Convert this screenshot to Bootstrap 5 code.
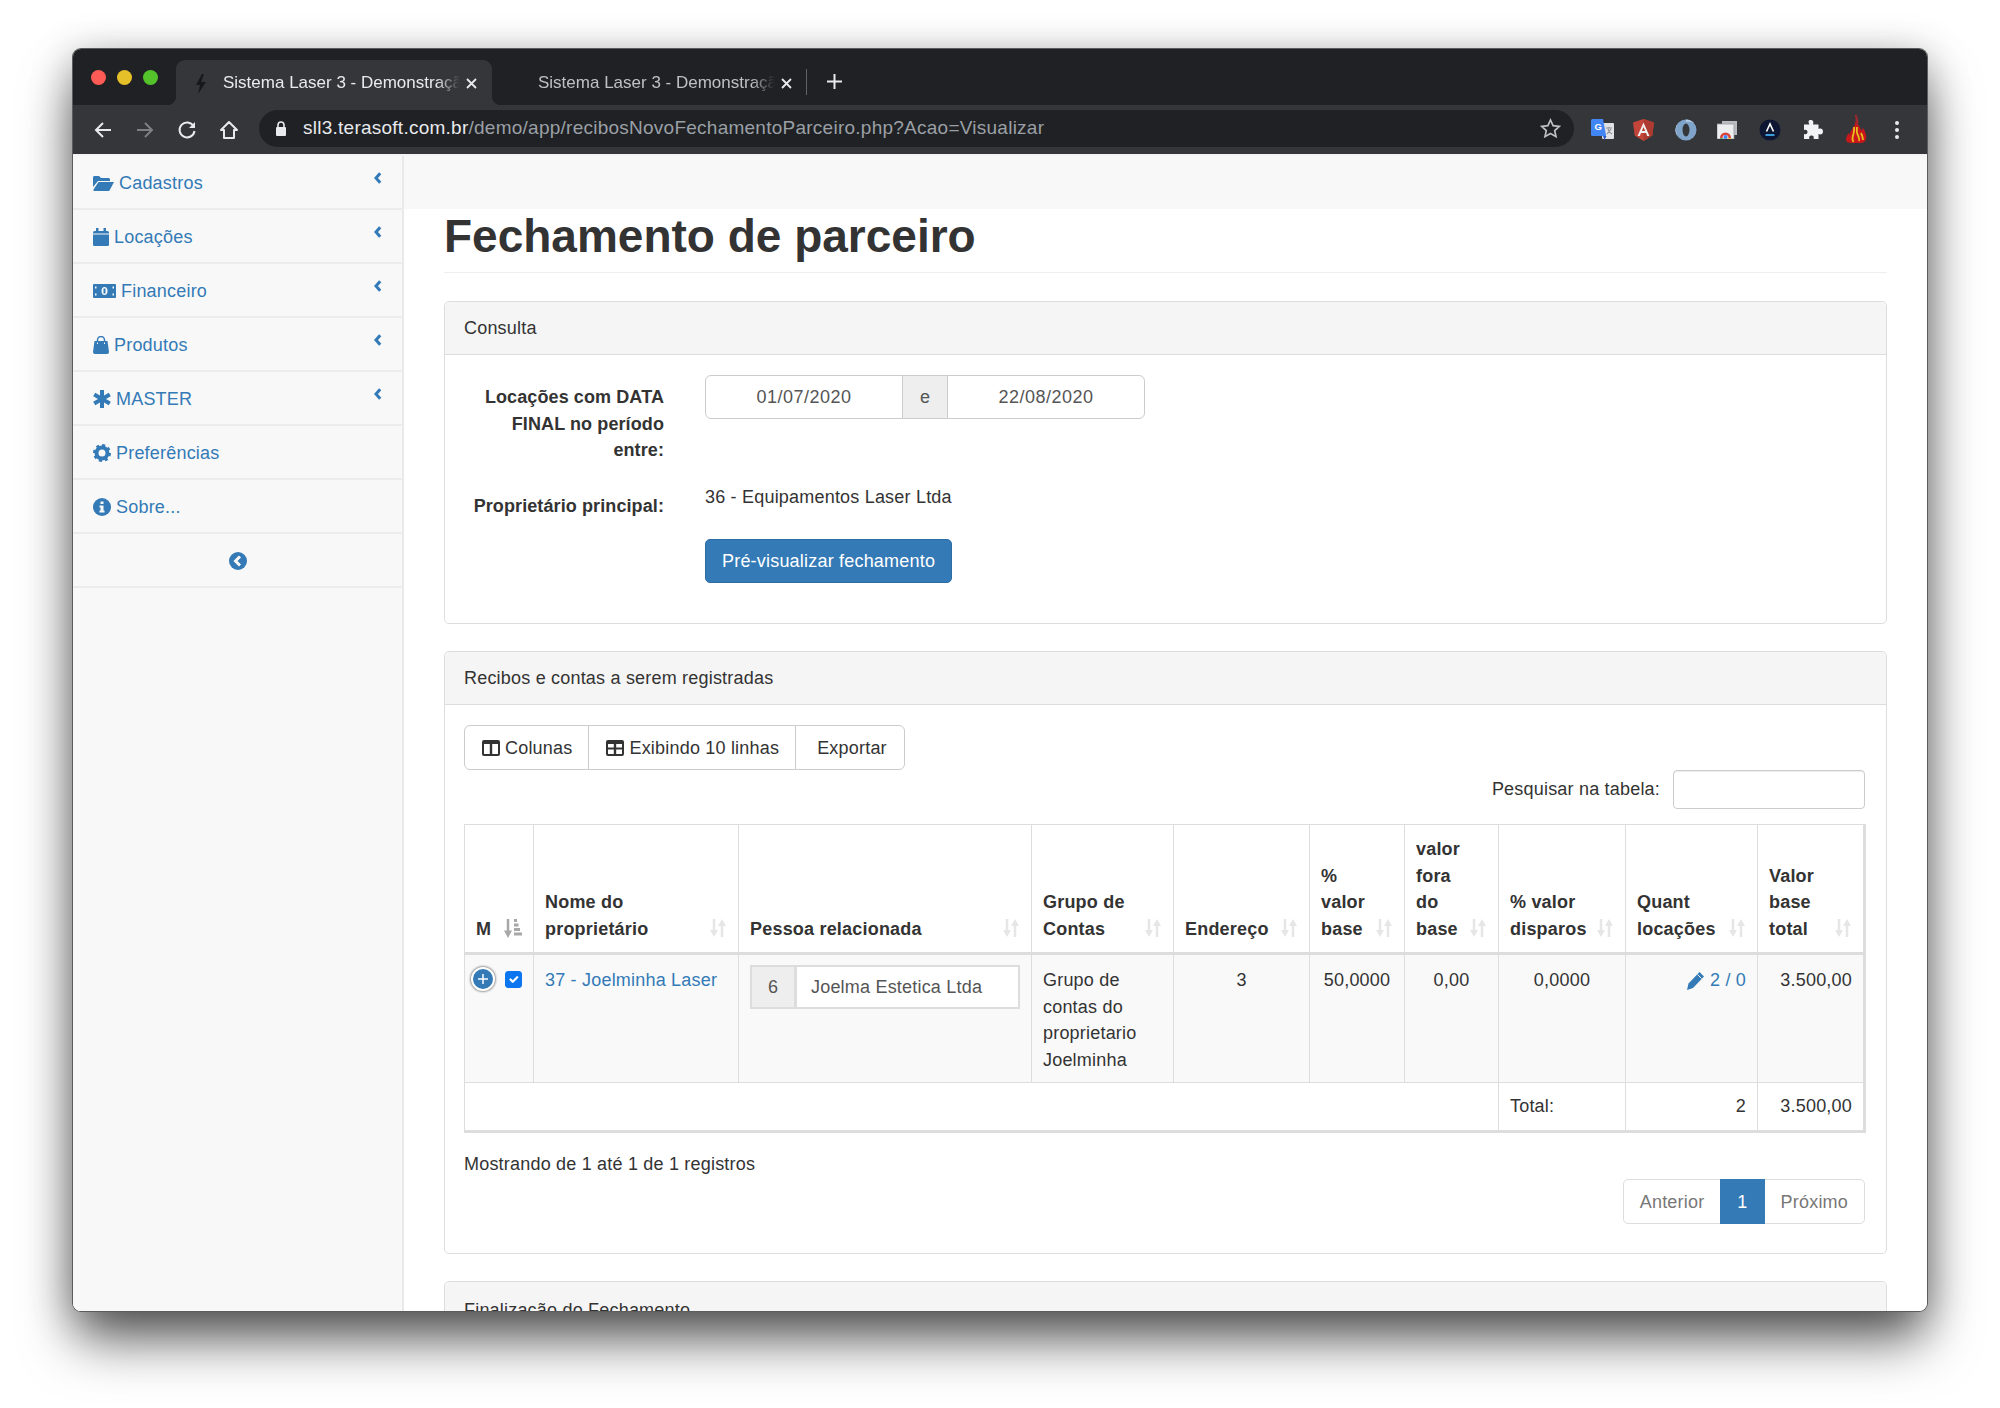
<!doctype html>
<html lang="pt-BR">
<head>
  <meta charset="utf-8">
  <title>Fechamento de parceiro</title>
  <link href="https://cdn.jsdelivr.net/npm/bootstrap@5.3.0/dist/css/bootstrap.min.css" rel="stylesheet">
  <style>
    html, body { height: 100%; }
    body {
      background: #fff;
      color: #333;
      font-family: "Liberation Sans", Arial, sans-serif;
      font-size: 18px;
      line-height: 26.5px;
      letter-spacing: .2px;
      padding: 49px 73px 0;
      overflow: hidden;
    }
    a { color: #337ab7; text-decoration: none; }

    /* janela do navegador */
    .browser-win {
      height: 1262px;
      border-radius: 8px;
      overflow: hidden;
      display: flex;
      flex-direction: column;
      box-shadow: 0 0 0 1px #5c5c5c, 0 32px 54px -4px rgba(0,0,0,.62), 0 6px 40px rgba(0,0,0,.28);
    }
    .tabstrip { height: 56px; background: #202124; flex: none; padding-top: 11px; }
    .traffic { width: 103px; padding-left: 18px; gap: 11px; padding-top: 10px; }
    .traffic i { width: 15px; height: 15px; border-radius: 50%; display: block; }
    .tl-red { background: #fd5b55; }
    .tl-yellow { background: #e6c029; }
    .tl-green { background: #54c22b; }
    .chrome-tab {
      width: 316px;
      height: 45px;
      border-radius: 9px 9px 0 0;
      font-size: 17px;
      letter-spacing: 0;
      padding-left: 19px;
      padding-top: 2px;
      color: #bdc1c6;
      position: relative;
    }
    .chrome-tab.is-active { background: #35363a; color: #e8eaed; }
    .chrome-tab.is-active::before, .chrome-tab.is-active::after {
      content: "";
      position: absolute;
      bottom: 0;
      width: 9px;
      height: 9px;
    }
    .chrome-tab.is-active::before { left: -9px; background: radial-gradient(circle at 0 0, transparent 9px, #35363a 9.5px); }
    .chrome-tab.is-active::after { right: -9px; background: radial-gradient(circle at 100% 0, transparent 9px, #35363a 9.5px); }
    .tab-title {
      width: 237px;
      margin-left: 16px;
      margin-right: 5px;
      white-space: nowrap;
      overflow: hidden;
      -webkit-mask-image: linear-gradient(to right, #000 90%, transparent 100%);
      mask-image: linear-gradient(to right, #000 90%, transparent 100%);
    }
    .tab-inactive { margin-left: 14px; padding-left: 32px; width: 300px; }
    .tab-inactive .tab-title { margin-left: 0; }
    .tab-sep { width: 1px; height: 26px; background: #5f6368; margin: 9px 0 0 0; }
    .tab-plus { margin: 12px 0 0 18px; }

    .toolbar { height: 51px; background: #35363a; flex: none; padding: 0 0 2px 20px; border-bottom: 2px solid #f4f4f4; }
    .nav-ico { width: 42px; flex: none; }
    .omnibox {
      width: 1315px;
      height: 37px;
      margin: 0 13px 0 -2px;
      background: #202124;
      border-radius: 19px;
      padding: 0 13px 0 16px;
      font-size: 19px;
      color: #9aa0a6;
      white-space: nowrap;
      letter-spacing: .25px;
    }
    .omnibox b { font-weight: 400; color: #e8eaed; }
    .ext-ico { width: 42px; flex: none; }
    .ext-nudge { padding-left: 2px; }
    .ext-dots { width: 33px; margin-left: 9px; flex: none; }

    .win-body { flex: 1; min-height: 0; background: #fff; }
    .side-menu { width: 331px; flex: none; background: #f8f8f8; border-right: 2px solid #e9e9e9; }
    .side-item {
      height: 54px;
      border-bottom: 2px solid #ececec;
      padding: 2px 20px 0 20px;
      color: #337ab7;
      gap: 5px;
    }
    .side-item:first-child { margin-right: -2px; padding-right: 22px; border-bottom-color: #ececec; }
    .side-item .side-chev { margin-left: auto; margin-top: -10px; }
    .side-ico { flex: none; }

    .main-area { flex: 1; min-width: 0; }
    .top-bar { height: 53px; background: #f8f8f8; flex: none; margin-left: -1px; }
    .page-area { padding: 0 40px; }
    .page-title {
      font-size: 46px;
      font-weight: 700;
      line-height: 51px;
      letter-spacing: 0;
      margin: 2px 0 0;
      padding-bottom: 10px;
      border-bottom: 1px solid #eee;
    }

    .panel-box { border: 1px solid #ddd; border-radius: 5px; margin-top: 27px; --bs-card-bg: #fff; }
    .page-title + .panel-box { margin-top: 28px; }
    .panel-box > .card-header { background: #f5f5f5; border-bottom: 1px solid #ddd; height: 53px; padding: 13px 19px; font-size: 18px; }
    .panel-box > .card-body { padding: 20px 21px 20px 19px; }
    .panel-box > .head-cut { padding-top: 15px; }

    .form-gap { gap: 41px; }
    .form-lbl { width: 200px; flex: none; text-align: right; font-weight: 700; padding-top: 9px; letter-spacing: .1px; }
    .date-group { width: 440px; }
    .date-group .form-control, .date-group .input-group-text, .rel-group .form-control, .rel-group .input-group-text {
      font-size: 18px;
      color: #555;
      line-height: 26px;
      letter-spacing: .2px;
    }
    .date-group .form-control { text-align: center; height: 44px; border-color: #ccc; padding: 8px; letter-spacing: .5px; }
    .date-group .input-group-text { height: 44px; width: 46px; justify-content: center; background: #eee; border-color: #ccc; padding: 0; }
    .btn-main { background: #337ab7; border: 1px solid #2e6da4; color: #fff; font-size: 18px; line-height: 26px; padding: 8px 16px; border-radius: 5px; height: 44px; letter-spacing: .2px; }

    .tool-btn { background: #fff; border: 1px solid #ccc; color: #333; font-size: 18px; line-height: 26px; padding: 8px 16px 8px 17px; height: 45px; display: flex; align-items: center; gap: 5px; letter-spacing: .2px; }
    .tool-exp { padding: 8px 17px 8px 21px; }

    .search-lbl { margin-right: 13px; }
    .search-box { width: 192px; height: 39px; border: 1px solid #ccc; border-radius: 4px; box-shadow: inset 0 1px 1px rgba(0,0,0,.075); }

    .data-table { table-layout: fixed; width: 1400px; margin: 15px 0 0; border-collapse: collapse; border: 1px solid #ddd; border-right-width: 3px; border-bottom-width: 3px; color: #333; --bs-table-bg: transparent; }
    .data-table th, .data-table td { border: 1px solid #ddd; padding: 11px; font-size: 18px; line-height: 26.5px; }
    .data-table thead th { vertical-align: bottom; border-bottom: 3px solid #ddd; font-weight: 700; padding-bottom: 10px; }
    .data-table tbody td { background: #f9f9f9; vertical-align: top; padding-top: 12px; padding-bottom: 9px; }
    .data-table tfoot td { height: 47px; padding-top: 10px; padding-bottom: 10px; }
    .w-m { width: 69px; } .w-nome { width: 205px; } .w-pessoa { width: 293px; } .w-grupo { width: 142px; }
    .w-end { width: 136px; } .w-pct { width: 95px; } .w-fora { width: 94px; } .w-disp { width: 127px; }
    .w-quant { width: 132px; } .w-total { width: 107px; }
    .th-flex { display: flex; justify-content: space-between; align-items: flex-end; }
    .sort-ico { flex: none; margin-bottom: 4px; }
    .data-table td.cell-m { padding: 11px 5px 9px; }
    .plus-ring { width: 24px; height: 24px; border-radius: 50%; background: #337ab7; border: 2px solid #fff; box-shadow: 0 0 2px 1px #999; flex: none; margin-left: 1px; margin-top: 1px; }
    .check-m.form-check-input { width: 17px; height: 17px; margin: 5px 0 0 2px; border-radius: 3px; float: none; flex: none; }
    .check-m.form-check-input:checked { background-color: #0b76ef; border-color: #0b76ef; }
    .rel-group { width: 270px; }
    .rel-group .input-group-text, .rel-group .form-control { height: 44px; border-radius: 0; border: 2px solid #ddd; }
    .rel-group .input-group-text { width: 46px; background: #eee; justify-content: center; padding: 0; }
    .rel-group .form-control { padding: 0 14px; background: #fff; margin-left: -2px; }
    .data-table td.cell-rel { padding-top: 10px; padding-bottom: 0; }

    .info-line { margin-top: 18px; }
    .pager-row { margin-top: 2px; }
    .pager-row .pagination { margin: 0 0 9px; --bs-pagination-font-size: 18px; --bs-pagination-padding-x: 16px; --bs-pagination-padding-y: 9px; --bs-pagination-color: #777; --bs-pagination-border-color: #ddd; --bs-pagination-active-bg: #337ab7; --bs-pagination-active-border-color: #337ab7; --bs-pagination-border-radius: 5px; }
    .pager-row .page-link { line-height: 26px; height: 45px; }
  </style>
</head>
<body>
  <svg width="0" height="0" class="position-absolute">
    <symbol id="sort-both" viewBox="0 0 18 20"><path d="M5 1v12M13 19V7" stroke="#e6e6e6" stroke-width="2.5"/><path d="M1 12h8l-4 7zM9 8h8l-4-7z" fill="#e6e6e6"/></symbol>
    <symbol id="chev-left" viewBox="0 0 8 12"><path d="M6.200 1.200 2 6l4.200 4.800" fill="none" stroke="#337ab7" stroke-width="3"/></symbol>
    <symbol id="tab-x" viewBox="0 0 13 13"><path d="m2 2 9 9M11 2l-9 9" stroke="#e8eaed" stroke-width="1.800"/></symbol>
  </svg>

  <div class="browser-win">
    <div class="tabstrip d-flex">
      <div class="traffic d-flex">
        <i class="tl-red"></i><i class="tl-yellow"></i><i class="tl-green"></i>
      </div>
      <div class="chrome-tab is-active d-flex align-items-center">
        <svg width="12" height="20" viewBox="0 0 12 20"><path d="M7 0 1 11h4l-2 9 8-12H6l3-8z" fill="#17181a"/></svg>
        <span class="tab-title">Sistema Laser 3 - Demonstração</span>
        <svg width="13" height="13"><use href="#tab-x"/></svg>
      </div>
      <div class="chrome-tab tab-inactive d-flex align-items-center">
        <span class="tab-title">Sistema Laser 3 - Demonstração</span>
        <svg width="13" height="13"><use href="#tab-x"/></svg>
      </div>
      <div class="tab-sep"></div>
      <svg class="tab-plus" width="19" height="19" viewBox="0 0 19 19"><path d="M9.500 2v15M2 9.500h15" stroke="#e8eaed" stroke-width="2"/></svg>
    </div>

    <div class="toolbar d-flex align-items-center">
      <div class="nav-ico"><svg width="20" height="20" viewBox="0 0 20 20"><path d="M18 10H3M10 3l-7 7 7 7" fill="none" stroke="#e8eaed" stroke-width="2"/></svg></div>
      <div class="nav-ico"><svg width="20" height="20" viewBox="0 0 20 20"><path d="M2 10h15M10 3l7 7-7 7" fill="none" stroke="#7c7f84" stroke-width="2"/></svg></div>
      <div class="nav-ico"><svg width="20" height="20" viewBox="0 0 20 20"><path d="M16.500 6A7.500 7.500 0 1 0 17.500 11" fill="none" stroke="#e8eaed" stroke-width="2"/><path d="M18 2v6h-6z" fill="#e8eaed"/></svg></div>
      <div class="nav-ico"><svg width="20" height="20" viewBox="0 0 20 20"><path d="M10 2 2 10h3v8h10v-8h3z" fill="none" stroke="#e8eaed" stroke-width="2" stroke-linejoin="round"/></svg></div>
      <div class="omnibox d-flex align-items-center flex-fill">
        <svg width="12" height="15" viewBox="0 0 12 15" class="me-3 flex-none"><path d="M3 6V4a3 3 0 0 1 6 0v2" fill="none" stroke="#e8eaed" stroke-width="1.600"/><rect x="1" y="6" width="10" height="9" rx="1" fill="#e8eaed"/></svg>
        <span><b>sll3.terasoft.com.br</b>/demo/app/recibosNovoFechamentoParceiro.php?Acao=Visualizar</span>
        <svg class="ms-auto" width="21" height="21" viewBox="0 0 21 21"><path d="m10.500 2 2.600 5.700 6.200.7-4.600 4.200 1.300 6.100-5.500-3.100L5 18.700l1.300-6.100L1.700 8.400l6.200-.7z" fill="none" stroke="#bdc1c6" stroke-width="1.700"/></svg>
      </div>
      <div class="ext-ico ms-1"><svg width="23" height="21" viewBox="0 0 23 21"><rect x="11" y="4" width="12" height="16" rx="1" fill="#dfe1e4"/><path d="M1.500 0H12l3 16v1H1.500A1.500 1.500 0 0 1 0 15.500v-14A1.500 1.500 0 0 1 1.500 0z" fill="#4285f4"/><path d="m12 17 1.500 4 2-4z" fill="#2a56c6"/><text x="3.500" y="11" font-size="9.500" font-weight="700" fill="#fff" font-family="Liberation Sans">G</text><path d="M15 9h6M18 8v1M16 15l4-5M17 10c.5 2 2 4 4 5" fill="none" stroke="#8a8d91" stroke-width="1.100"/></svg></div>
      <div class="ext-ico"><svg width="21" height="22" viewBox="0 0 21 22"><path d="M10.500 0 21 3.500 19.300 16.500 10.500 22 1.700 16.500 0 3.500z" fill="#c3453a"/><path d="M10.500 0 21 3.500 19.300 16.500 10.500 22z" fill="#ae3b31"/><path d="M10.500 3.500 4.500 17h2.300l1.200-3h5l1.200 3h2.300zM8.900 12l1.600-4 1.600 4z" fill="#f1eeee"/></svg></div>
      <div class="ext-ico"><svg width="22" height="22" viewBox="0 0 22 22"><circle cx="11" cy="11" r="10.500" fill="#7fa3c9"/><path d="M3 4a10.500 10.500 0 0 0 0 14A14 14 0 0 1 3 4z" fill="#c6d8ea"/><path d="M11 .5a10.500 10.500 0 0 1 8 3.500c-2-1-4-1.500-8-1z" fill="#b5cce2"/><ellipse cx="11" cy="11" rx="3.500" ry="6.500" fill="#35363a"/></svg></div>
      <div class="ext-ico"><svg width="20" height="18" viewBox="0 0 20 18"><rect x="5" y="0" width="15" height="14" fill="#b9bcc0"/><rect x="0" y="3" width="17" height="15" fill="#eceef0" stroke="#9a9da1" stroke-width=".8"/><path d="M3 17a5.500 5.500 0 0 1 11 0h-2.500a3 3 0 0 0-6 0z" fill="#d9433a"/><path d="M3 17h2.500l1 .8H3z" fill="#3aa757"/><path d="M11.500 17H14v.8h-3.500z" fill="#f4c20d"/><circle cx="8.500" cy="16" r="2" fill="#4285f4"/></svg></div>
      <div class="ext-ico"><svg width="22" height="22" viewBox="0 0 22 22"><circle cx="11" cy="11" r="10.500" fill="#0d1733"/><path d="m7.500 12.500 3.500-7.500 3.500 7.500" fill="none" stroke="#fff" stroke-width="1.600"/><rect x="6.500" y="15" width="9" height="2" fill="#3c9bd8"/></svg></div>
      <div class="ext-ico ext-nudge"><svg width="20" height="19" viewBox="0 0 20 19"><path d="M7.500 0c2.500 0 3.500 2 2.500 4.500h5.500v4.500c2.500-1 4.500 0 4.500 2.500S18 15 15.500 14v5h-5c1-2.500-.5-3.500-2-3.500s-3 1-2 3.500H1v-5c2.500 1 3.500-.5 3.500-2S3.500 9 1 10V4.500h5.500C5 2 5.500 0 7.500 0z" fill="#f1f3f4"/></svg></div>
      <div class="ext-ico ext-nudge"><svg width="22" height="30" viewBox="0 0 22 30"><path d="M2 28c-2-3 0-7 2-9l1 2c0-5 4-7 5-11 1-3 1-7 0-10 2 3 3 7 3 10 1 3 3 4 3 7l2-3c2 3 4 8 3 11-1 3-3 4-5 4H6c-2 0-3-1-4-1z" fill="#c9161b"/><path d="M8.500 28c-2-3-1-5 0-8 .5-2 1-4 .5-7M14 27c1-3-1-5-2-8-.5-2 0-4 0-6M18 26c0-3-1-5-2-7" fill="none" stroke="#e9bf1c" stroke-width="1.800"/><path d="M10.500 1c1.500 3 2.500 6 1.500 10" fill="none" stroke="#9a2a30" stroke-width="2"/></svg></div>
      <div class="ext-dots"><svg width="6" height="20" viewBox="0 0 6 20"><circle cx="3" cy="3" r="2" fill="#e8eaed"/><circle cx="3" cy="10" r="2" fill="#e8eaed"/><circle cx="3" cy="17" r="2" fill="#e8eaed"/></svg></div>
    </div>

    <div class="win-body d-flex">
      <nav class="side-menu d-flex flex-column">
        <a href="#" class="side-item d-flex align-items-center">
          <svg class="side-ico" width="21" height="15" viewBox="0 0 21 15"><path d="M0 1.500C0 .7.600 0 1.500 0h4.500l2 2h7.500c.8 0 1.500.6 1.500 1.500V5H5L0 11z" fill="#337ab7"/><path d="M5.500 6H21l-4.500 8.500a1 1 0 0 1-1 .5H1.500a1 1 0 0 1-1-1.500z" fill="#337ab7"/></svg>
          <span>Cadastros</span>
          <svg class="side-chev" width="8" height="12"><use href="#chev-left"/></svg>
        </a>
        <a href="#" class="side-item d-flex align-items-center">
          <svg class="side-ico" width="16" height="18" viewBox="0 0 16 18"><rect x="0" y="3" width="16" height="15" rx="1.500" fill="#337ab7"/><rect x="3" y="0" width="2.500" height="4" fill="#337ab7"/><rect x="10.500" y="0" width="2.500" height="4" fill="#337ab7"/><rect y="5.500" width="16" height="1" fill="#f8f8f8"/></svg>
          <span>Locações</span>
          <svg class="side-chev" width="8" height="12"><use href="#chev-left"/></svg>
        </a>
        <a href="#" class="side-item d-flex align-items-center">
          <svg class="side-ico" width="23" height="14" viewBox="0 0 23 14"><rect width="23" height="14" rx="1" fill="#337ab7"/><ellipse cx="11.500" cy="7" rx="3" ry="4" fill="#f8f8f8"/><rect x="10.500" y="4.500" width="2" height="5" fill="#337ab7"/><rect x="2" y="2.500" width="1.500" height="2" fill="#f8f8f8"/><rect x="19.500" y="2.500" width="1.500" height="2" fill="#f8f8f8"/><rect x="2" y="9.500" width="1.500" height="2" fill="#f8f8f8"/><rect x="19.500" y="9.500" width="1.500" height="2" fill="#f8f8f8"/></svg>
          <span>Financeiro</span>
          <svg class="side-chev" width="8" height="12"><use href="#chev-left"/></svg>
        </a>
        <a href="#" class="side-item d-flex align-items-center">
          <svg class="side-ico" width="16" height="18" viewBox="0 0 16 18"><path d="M1.500 5h13l1.500 11a2 2 0 0 1-2 2H2a2 2 0 0 1-2-2z" fill="#337ab7"/><path d="M4.500 7V4a3.500 3.500 0 0 1 7 0v3" fill="none" stroke="#337ab7" stroke-width="1.500"/><path d="M4.500 6.500v1.500M11.500 6.500v1.500" stroke="#f8f8f8" stroke-width="1"/></svg>
          <span>Produtos</span>
          <svg class="side-chev" width="8" height="12"><use href="#chev-left"/></svg>
        </a>
        <a href="#" class="side-item d-flex align-items-center">
          <svg class="side-ico" width="18" height="18" viewBox="0 0 18 18"><path d="M9 0v18M1.200 4.500l15.600 9M16.800 4.500l-15.600 9" stroke="#337ab7" stroke-width="4"/></svg>
          <span>MASTER</span>
          <svg class="side-chev" width="8" height="12"><use href="#chev-left"/></svg>
        </a>
        <a href="#" class="side-item d-flex align-items-center">
          <svg class="side-ico" width="18" height="18" viewBox="0 0 18 18"><circle cx="9" cy="9" r="5.500" fill="none" stroke="#337ab7" stroke-width="4"/><circle cx="9" cy="9" r="7.800" fill="none" stroke="#337ab7" stroke-width="2.400" stroke-dasharray="3.100 3"/></svg>
          <span>Preferências</span>
        </a>
        <a href="#" class="side-item d-flex align-items-center">
          <svg class="side-ico" width="18" height="18" viewBox="0 0 18 18"><circle cx="9" cy="9" r="9" fill="#337ab7"/><rect x="7.500" y="3.500" width="3" height="2.500" fill="#f8f8f8"/><path d="M6.500 7.500h4v5h1v2h-5v-2h1v-3h-1z" fill="#f8f8f8"/></svg>
          <span>Sobre...</span>
        </a>
        <div class="side-item d-flex align-items-center justify-content-center">
          <svg width="18" height="18" viewBox="0 0 18 18"><circle cx="9" cy="9" r="9" fill="#337ab7"/><path d="M11 4.500 6.500 9l4.500 4.500" fill="none" stroke="#f8f8f8" stroke-width="3"/></svg>
        </div>
      </nav>

      <div class="main-area d-flex flex-column overflow-hidden">
        <div class="top-bar"></div>
        <div class="page-area">
          <h1 class="page-title">Fechamento de parceiro</h1>

          <div class="card panel-box">
            <div class="card-header">Consulta</div>
            <div class="card-body">
              <div class="d-flex form-gap">
                <div class="form-lbl">Locações com DATA FINAL no período entre:</div>
                <div class="input-group date-group flex-nowrap align-self-start">
                  <input type="text" class="form-control" value="01/07/2020">
                  <span class="input-group-text">e</span>
                  <input type="text" class="form-control" value="22/08/2020">
                </div>
              </div>
              <div class="d-flex form-gap mt-3 pt-1">
                <div class="form-lbl">Proprietário principal:</div>
                <div>36 - Equipamentos Laser Ltda</div>
              </div>
              <div class="d-flex form-gap mt-3 pt-1">
                <div class="form-lbl p-0"></div>
                <button class="btn btn-main" type="button">Pré-visualizar fechamento</button>
              </div>
              <div class="pt-3 mt-1"></div>
            </div>
          </div>

          <div class="card panel-box">
            <div class="card-header">Recibos e contas a serem registradas</div>
            <div class="card-body">
              <div class="btn-group">
                <button class="btn tool-btn" type="button"><svg width="18" height="16" viewBox="0 0 18 16"><path d="M0 2a2 2 0 0 1 2-2h14a2 2 0 0 1 2 2v12a2 2 0 0 1-2 2H2a2 2 0 0 1-2-2zm2 2v10h5.800V4zm8.200 0v10H16V4z" fill="#333" fill-rule="evenodd"/></svg>Colunas</button>
                <button class="btn tool-btn" type="button"><svg width="18" height="16" viewBox="0 0 18 16"><path d="M0 2a2 2 0 0 1 2-2h14a2 2 0 0 1 2 2v12a2 2 0 0 1-2 2H2a2 2 0 0 1-2-2zm2 2v3.500h5.800V4zm8.200 0v3.500H16V4zM2 9.500V14h5.800V9.500zm8.200 0V14H16V9.500z" fill="#333" fill-rule="evenodd"/></svg>Exibindo 10 linhas</button>
                <button class="btn tool-btn tool-exp" type="button">Exportar</button>
              </div>
              <div class="d-flex justify-content-end align-items-center">
                <span class="search-lbl">Pesquisar na tabela:</span>
                <input type="text" class="search-box" aria-label="Pesquisar na tabela">
              </div>

              <table class="table data-table">
                <colgroup>
                  <col class="w-m"><col class="w-nome"><col class="w-pessoa"><col class="w-grupo"><col class="w-end">
                  <col class="w-pct"><col class="w-fora"><col class="w-disp"><col class="w-quant"><col class="w-total">
                </colgroup>
                <thead>
                  <tr>
                    <th><div class="th-flex">M
                      <svg class="sort-ico" width="18" height="19" viewBox="0 0 18 19"><path d="M4 0v12" stroke="#a8a8a8" stroke-width="2.500"/><path d="M0 11.500h8L4 19zM10 0h3v3h-3zM10 4.500h4.500v3H10zM10 9h6v3h-6zM10 13.500h8v3h-8z" fill="#a8a8a8"/></svg></div></th>
                    <th><div class="th-flex"><span>Nome do<br>proprietário</span>
                      <svg class="sort-ico" width="18" height="20"><use href="#sort-both"/></svg></div></th>
                    <th><div class="th-flex"><span>Pessoa relacionada</span>
                      <svg class="sort-ico" width="18" height="20"><use href="#sort-both"/></svg></div></th>
                    <th><div class="th-flex"><span>Grupo de<br>Contas</span>
                      <svg class="sort-ico" width="18" height="20"><use href="#sort-both"/></svg></div></th>
                    <th><div class="th-flex"><span>Endereço</span>
                      <svg class="sort-ico" width="18" height="20"><use href="#sort-both"/></svg></div></th>
                    <th><div class="th-flex"><span>%<br>valor<br>base</span>
                      <svg class="sort-ico" width="18" height="20"><use href="#sort-both"/></svg></div></th>
                    <th><div class="th-flex"><span>valor<br>fora<br>do<br>base</span>
                      <svg class="sort-ico" width="18" height="20"><use href="#sort-both"/></svg></div></th>
                    <th><div class="th-flex"><span>% valor<br>disparos</span>
                      <svg class="sort-ico" width="18" height="20"><use href="#sort-both"/></svg></div></th>
                    <th><div class="th-flex"><span>Quant<br>locações</span>
                      <svg class="sort-ico" width="18" height="20"><use href="#sort-both"/></svg></div></th>
                    <th><div class="th-flex"><span>Valor<br>base<br>total</span>
                      <svg class="sort-ico" width="18" height="20"><use href="#sort-both"/></svg></div></th>
                  </tr>
                </thead>
                <tbody>
                  <tr>
                    <td class="cell-m">
                      <div class="d-flex gap-2">
                        <span class="plus-ring d-flex align-items-center justify-content-center"><svg width="12" height="12" viewBox="0 0 12 12"><path d="M6 1v10M1 6h10" stroke="#fff" stroke-width="1.500"/></svg></span>
                        <input class="form-check-input check-m" type="checkbox" checked aria-label="Marcar">
                      </div>
                    </td>
                    <td><a href="#">37 - Joelminha Laser</a></td>
                    <td class="cell-rel">
                      <div class="input-group rel-group flex-nowrap">
                        <span class="input-group-text">6</span>
                        <input type="text" class="form-control" value="Joelma Estetica Ltda">
                      </div>
                    </td>
                    <td>Grupo de contas do proprietario Joelminha</td>
                    <td class="text-center">3</td>
                    <td class="text-center">50,0000</td>
                    <td class="text-center">0,00</td>
                    <td class="text-center">0,0000</td>
                    <td class="text-end"><a href="#"><svg width="19" height="20" viewBox="0 0 19 20"><path d="M13.500 1 18 5.500 7 17l-6 2 1.500-6.500z" fill="#337ab7"/><path d="m11.500 3.500 4 4" stroke="#f9f9f9" stroke-width="1"/></svg> 2 / 0</a></td>
                    <td class="text-end">3.500,00</td>
                  </tr>
                </tbody>
                <tfoot>
                  <tr>
                    <td colspan="7"></td>
                    <td>Total:</td>
                    <td class="text-end">2</td>
                    <td class="text-end">3.500,00</td>
                  </tr>
                </tfoot>
              </table>

              <div class="info-line">Mostrando de 1 até 1 de 1 registros</div>
              <div class="pager-row d-flex justify-content-end">
                <ul class="pagination">
                  <li class="page-item"><a class="page-link" href="#">Anterior</a></li>
                  <li class="page-item active"><a class="page-link" href="#">1</a></li>
                  <li class="page-item"><a class="page-link" href="#">Próximo</a></li>
                </ul>
              </div>
            </div>
          </div>

          <div class="card panel-box">
            <div class="card-header head-cut">Finalização do Fechamento</div>
          </div>
        </div>
      </div>
    </div>
  </div>
  <script src="https://cdn.jsdelivr.net/npm/bootstrap@5.3.0/dist/js/bootstrap.bundle.min.js"></script>
</body>
</html>
